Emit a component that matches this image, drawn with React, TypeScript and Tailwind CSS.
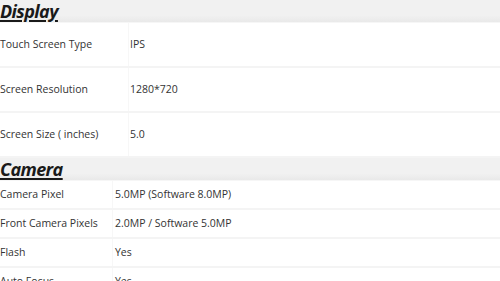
import React from 'react';

interface SpecRow {
  label: string;
  value: string;
}

const display: SpecRow[] = [
  { label: 'Touch Screen Type', value: 'IPS' },
  { label: 'Screen Resolution', value: '1280*720' },
  { label: 'Screen Size ( inches)', value: '5.0' },
];

const camera: SpecRow[] = [
  { label: 'Camera Pixel', value: '5.0MP (Software 8.0MP)' },
  { label: 'Front Camera Pixels', value: '2.0MP / Software 5.0MP' },
  { label: 'Flash', value: 'Yes' },
  { label: 'Auto Focus', value: 'Yes' },
];

const SectionTitle: React.FC<{ title: string }> = ({ title }) => (
  <div className="h-[23px] bg-gradient-to-b from-[#f1f1f1] from-70% to-[#e9e9e9] border-b border-[#f6f6f6] flex items-center">
    <h2 className="text-[18px] leading-none font-bold italic tracking-[-0.6px] underline underline-offset-2 decoration-[1.5px] text-[#1a1a1a]">
      {title}
    </h2>
  </div>
);

const App: React.FC = () => {
  return (
    <div className="w-[500px] h-[281px] overflow-hidden bg-white font-['Open_Sans',sans-serif] text-[#333]">
      <SectionTitle title="Display" />
      <div>
        {display.map((row) => (
          <div
            key={row.label}
            className="grid grid-cols-[129px_1fr] h-[45px] border-b-2 border-[#f4f4f4] text-[10.5px]"
          >
            <div className="flex items-center border-r border-[#f7f7f7]">{row.label}</div>
            <div className="flex items-center pl-[1px]">{row.value}</div>
          </div>
        ))}
      </div>
      <SectionTitle title="Camera" />
      <div>
        {camera.map((row) => (
          <div
            key={row.label}
            className="grid grid-cols-[113px_1fr] h-[29px] border-b-2 border-[#f4f4f4] text-[10.5px]"
          >
            <div className="flex items-center border-r border-[#f7f7f7]">{row.label}</div>
            <div className="flex items-center pl-[2px]">{row.value}</div>
          </div>
        ))}
      </div>
    </div>
  );
};

export default App;
